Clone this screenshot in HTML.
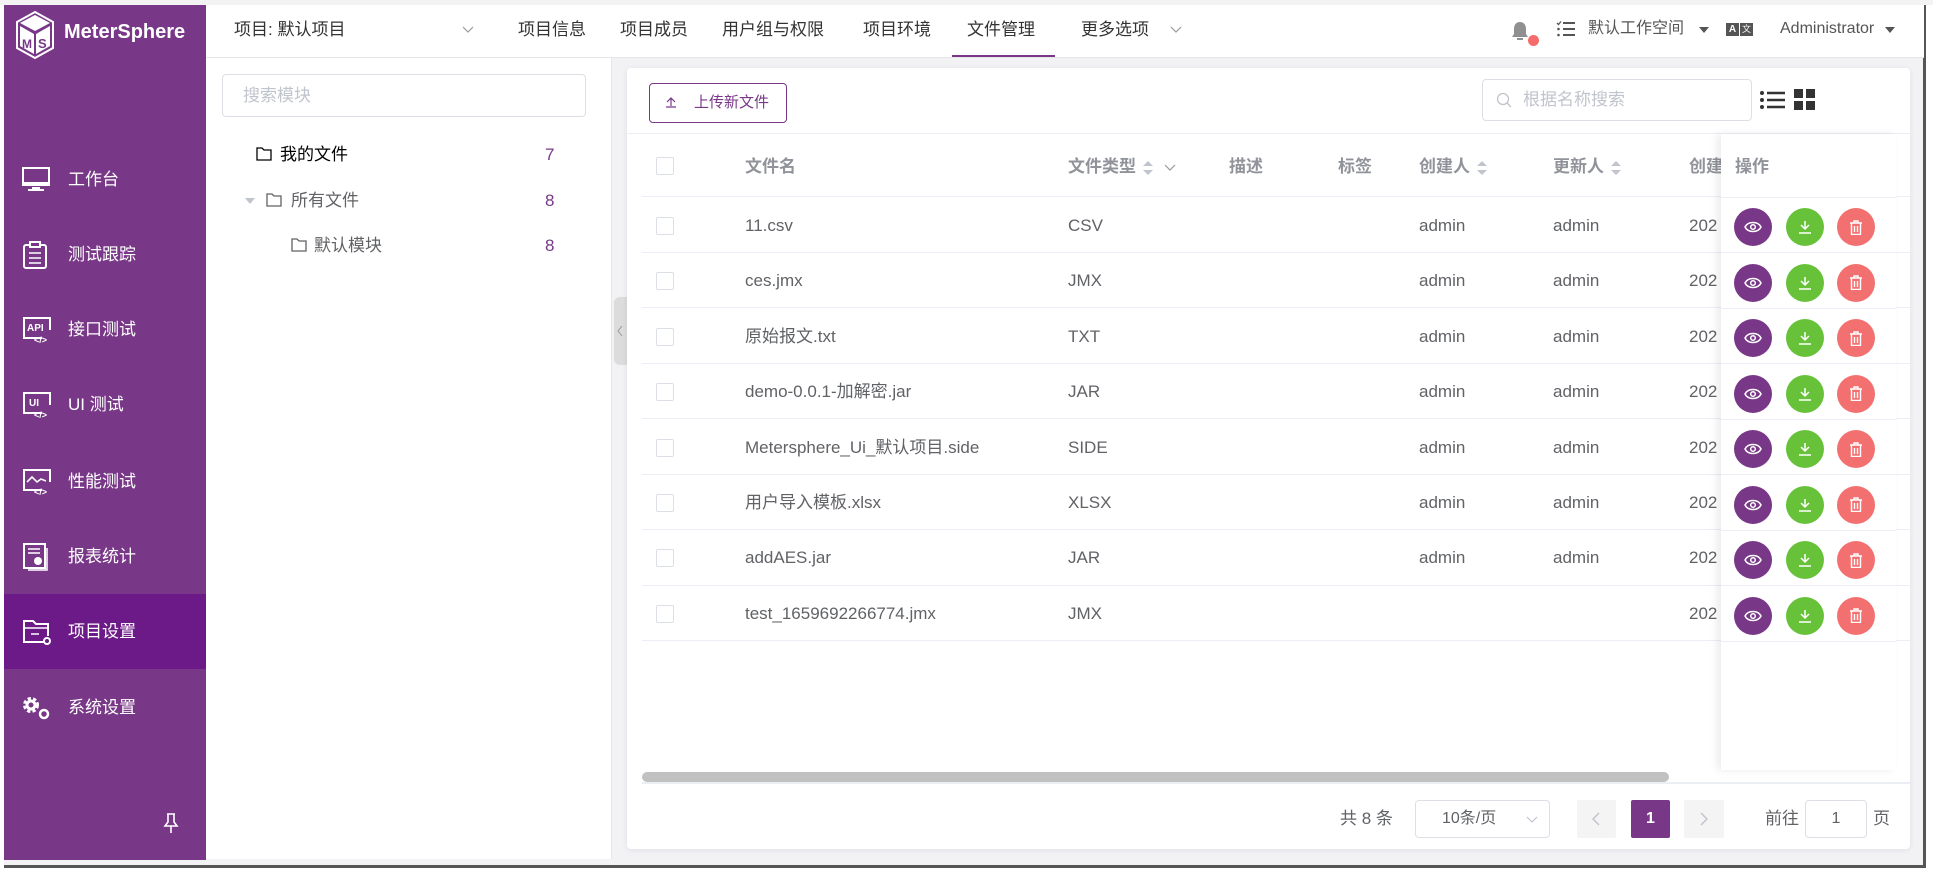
<!DOCTYPE html>
<html><head><meta charset="utf-8">
<style>
*{box-sizing:border-box;margin:0;padding:0}
body{width:1933px;height:875px;background:#fff;position:relative;overflow:hidden;font-family:"Liberation Sans","Noto Sans CJK SC",sans-serif;color:#606266;line-height:20px}
.a{position:absolute;white-space:nowrap;line-height:20px}
.win{left:4px;top:5px;width:1922px;height:863px;background:#f2f2f5;border-right:3px solid #555;border-bottom:3px solid #555;overflow:hidden}
.side{left:4px;top:5px;width:202px;height:855px;background:#783887}
.nav{left:4px;width:202px;height:75px;color:#fff;font-size:17px;display:flex;align-items:center}
.nav svg{position:absolute;left:18px}
.nav span{position:absolute;left:64px}
.hdr{left:206px;top:5px;width:1718px;height:53px;background:#fff;border-bottom:1px solid #e6e6e6}
.hn{top:20px;font-size:17px;color:#333}
.lp{left:206px;top:58px;width:406px;height:801px;background:#fff;border-right:1px solid #e6e6e6}
.card{left:627px;top:68px;width:1283px;height:781px;background:#fff;border-radius:4px;box-shadow:0 1px 6px rgba(0,0,0,.08)}
.th{top:155px;font-size:17px;font-weight:bold;color:#909399}
.cb{width:18px;height:18px;border:1px solid #dcdfe6;border-radius:2px;background:#fff}
.row{left:642px;width:1268px;height:55.5px;border-bottom:1px solid #ebeef5}
.td{font-size:17px;color:#606266}
.btn{width:38px;height:38px;border-radius:50%;display:flex;align-items:center;justify-content:center}
.sort{display:inline-block;vertical-align:middle;margin-left:6px}
</style></head><body>
<div class="a" style="left:0;top:0;width:1933px;height:5px;background:#f3f3f3"></div>
<div class="a win"></div>
<div class="a side"></div>
<svg class="a" style="left:14px;top:10px" width="42" height="50" viewBox="0 0 42 50"><path d="M21 2 L39 12 L39 38 L21 48 L3 38 L3 12 Z" fill="none" stroke="#fff" stroke-width="2"/><path d="M21 5 L36 13 L21 21 L6 13Z" fill="#fff"/><path d="M6 16 L20 24 L20 44 L6 36Z" fill="#fff"/><path d="M22 24 L36 16 L36 36 L22 44Z" fill="#fff"/><text x="8" y="38" font-size="12" font-weight="bold" fill="#783887" font-family="Liberation Sans">M</text><text x="24" y="38" font-size="13" font-weight="bold" fill="#783887" font-family="Liberation Sans">S</text></svg>
<div class="a" style="left:64px;top:20px;color:#fff;font-size:20px;font-weight:bold;line-height:24px">MeterSphere</div>
<div class="a nav" style="top:142px"><svg width="28" height="26" viewBox="0 0 28 26"><rect x="1" y="1" width="26" height="17" fill="none" stroke="#fff" stroke-width="2"/><rect x="1" y="15" width="26" height="3" fill="#fff"/><rect x="10" y="20" width="8" height="2" fill="#fff"/><rect x="6" y="22" width="16" height="2" fill="#fff"/></svg><span>工作台</span></div>
<div class="a nav" style="top:217px"><svg width="26" height="28" viewBox="0 0 26 28"><rect x="2" y="4" width="22" height="23" rx="2" fill="none" stroke="#fff" stroke-width="2"/><rect x="8" y="1" width="10" height="5" fill="#783887" stroke="#fff" stroke-width="2"/><path d="M7 12h12M7 17h12M7 22h12" stroke="#fff" stroke-width="1.6"/></svg><span>测试跟踪</span></div>
<div class="a nav" style="top:292px"><svg width="30" height="28" viewBox="0 0 30 28"><path d="M20 22H2V2h26v12" fill="none" stroke="#fff" stroke-width="2"/><text x="5" y="15" font-size="10" font-weight="bold" fill="#fff" font-family="Liberation Sans">API</text><text x="12" y="27" font-size="9" font-weight="bold" fill="#fff" font-family="Liberation Sans">&lt;/&gt;</text></svg><span>接口测试</span></div>
<div class="a nav" style="top:367px"><svg width="30" height="28" viewBox="0 0 30 28"><path d="M20 22H2V2h26v12" fill="none" stroke="#fff" stroke-width="2"/><text x="7" y="15" font-size="10" font-weight="bold" fill="#fff" font-family="Liberation Sans">UI</text><text x="12" y="27" font-size="9" font-weight="bold" fill="#fff" font-family="Liberation Sans">&lt;/&gt;</text></svg><span>UI 测试</span></div>
<div class="a nav" style="top:444px"><svg width="30" height="28" viewBox="0 0 30 28"><path d="M20 22H2V2h26v12" fill="none" stroke="#fff" stroke-width="2"/><path d="M5 14l5-5 5 5 4-3 5 2" fill="none" stroke="#fff" stroke-width="1.6"/><text x="12" y="27" font-size="9" font-weight="bold" fill="#fff" font-family="Liberation Sans">&lt;/&gt;</text></svg><span>性能测试</span></div>
<div class="a nav" style="top:519px"><svg width="28" height="30" viewBox="0 0 28 30"><rect x="2" y="2" width="21" height="24" fill="none" stroke="#fff" stroke-width="2"/><path d="M25 6v22H6" fill="none" stroke="#fff" stroke-width="1.5"/><path d="M6 7h12M6 11h12" stroke="#fff" stroke-width="1.5"/><circle cx="16" cy="19" r="4" fill="#fff"/></svg><span>报表统计</span></div>
<div class="a nav" style="top:594px;background:#6c1a87"><svg width="30" height="28" viewBox="0 0 30 28"><path d="M23 24H2V3h9l3 3h12v12" fill="none" stroke="#fff" stroke-width="2"/><path d="M2 10h24M9 16h8" stroke="#fff" stroke-width="1.6"/><circle cx="25" cy="23" r="3" fill="none" stroke="#fff" stroke-width="2"/></svg><span>项目设置</span></div>
<div class="a nav" style="top:670px"><svg width="30" height="28" viewBox="0 0 30 28"><circle cx="9" cy="11" r="6" fill="none" stroke="#fff" stroke-width="4" stroke-dasharray="3 2"/><circle cx="9" cy="11" r="4" fill="none" stroke="#fff" stroke-width="3"/><circle cx="22" cy="20" r="4" fill="none" stroke="#fff" stroke-width="2.5"/></svg><span>系统设置</span></div>
<svg class="a" style="left:163px;top:812px" width="16" height="22" viewBox="0 0 16 22"><path d="M4 2h8M5 2v8l-3 4h12l-3-4V2M8 14v7" fill="none" stroke="#fff" stroke-width="1.6"/></svg>
<div class="a hdr"></div>
<div class="a hn" style="left:234px">项目: 默认项目</div>
<svg class="a" style="left:462px;top:26px" width="12" height="8"><path d="M1 1l5 5 5-5" fill="none" stroke="#999" stroke-width="1.2"/></svg>
<div class="a hn" style="left:518px">项目信息</div>
<div class="a hn" style="left:620px">项目成员</div>
<div class="a hn" style="left:722px">用户组与权限</div>
<div class="a hn" style="left:863px">项目环境</div>
<div class="a hn" style="left:967px">文件管理</div>
<div class="a" style="left:952px;top:55px;width:103px;height:2px;background:#783887"></div>
<div class="a hn" style="left:1081px">更多选项</div>
<svg class="a" style="left:1170px;top:26px" width="12" height="8"><path d="M1 1l5 5 5-5" fill="none" stroke="#999" stroke-width="1.2"/></svg>
<svg class="a" style="left:1510px;top:20px" width="20" height="22" viewBox="0 0 20 22"><path d="M10 2c-4 0-6 3-6 7v5l-2 3h16l-2-3V9c0-4-2-7-6-7z" fill="#909090"/><rect x="7" y="18" width="6" height="2" fill="#909090"/></svg>
<div class="a" style="left:1528px;top:35px;width:11px;height:11px;border-radius:50%;background:#f56c6c"></div>
<svg class="a" style="left:1556px;top:21px" width="20" height="16" viewBox="0 0 20 16"><path d="M7 2h12M7 8h12M7 14h12" stroke="#555" stroke-width="2"/><path d="M1 2l1.5 1.5L5 0.5" stroke="#555" fill="none" stroke-width="1.3"/><circle cx="2.5" cy="8" r="1.3" fill="#555"/><circle cx="2.5" cy="14" r="1.3" fill="#555"/></svg>
<div class="a hn" style="left:1588px;top:19px;font-size:16px;color:#555">默认工作空间</div>
<svg class="a" style="left:1699px;top:27px" width="10" height="6"><path d="M0 0h10L5 6z" fill="#555"/></svg>
<div class="a" style="left:1726px;top:23px;width:13px;height:13px;background:#555;color:#fff;font-size:10px;font-weight:bold;text-align:center;line-height:13px">A</div>
<div class="a" style="left:1740px;top:23px;width:13px;height:13px;background:#555;color:#fff;font-size:9px;text-align:center;line-height:13px">文</div>
<div class="a hn" style="left:1780px;top:19px;font-size:16px;color:#555">Administrator</div>
<svg class="a" style="left:1885px;top:27px" width="10" height="6"><path d="M0 0h10L5 6z" fill="#555"/></svg>
<div class="a lp"></div>
<div class="a" style="left:222px;top:74px;width:364px;height:43px;border:1px solid #dcdfe6;border-radius:4px;font-size:17px;color:#c0c4cc;padding:11px 20px">搜索模块</div>
<svg class="a" style="left:256px;top:147px" width="16" height="14"><path d="M1 1h5l2 2h7v10H1z" fill="none" stroke="#000" stroke-width="1.3"/></svg>
<div class="a" style="left:280px;top:145px;font-size:17px;color:#000">我的文件</div>
<div class="a" style="left:545px;top:145px;font-size:17px;color:#783887">7</div>
<svg class="a" style="left:245px;top:198px" width="10" height="6"><path d="M0 0h10L5 6z" fill="#c0c4cc"/></svg>
<svg class="a" style="left:266px;top:193px" width="16" height="14"><path d="M1 1h5l2 2h7v10H1z" fill="none" stroke="#606266" stroke-width="1.3"/></svg>
<div class="a" style="left:291px;top:191px;font-size:17px;color:#606266">所有文件</div>
<div class="a" style="left:545px;top:191px;font-size:17px;color:#783887">8</div>
<svg class="a" style="left:291px;top:238px" width="16" height="14"><path d="M1 1h5l2 2h7v10H1z" fill="none" stroke="#606266" stroke-width="1.3"/></svg>
<div class="a" style="left:314px;top:236px;font-size:17px;color:#606266">默认模块</div>
<div class="a" style="left:545px;top:236px;font-size:17px;color:#783887">8</div>
<div class="a" style="left:614px;top:297px;width:13px;height:68px;background:#dcdcdc;border-radius:6px 0 0 6px"></div>
<svg class="a" style="left:616px;top:325px" width="8" height="12"><path d="M6 1L2 6l4 5" fill="none" stroke="#999" stroke-width="1"/></svg>
<div class="a card"></div>
<div class="a" style="left:649px;top:83px;width:138px;height:40px;border:1px solid #783887;border-radius:4px;color:#783887;font-size:15px;padding:9px 0 0 44px">上传新文件</div>
<svg class="a" style="left:665px;top:96px" width="12" height="12"><path d="M6 10V2M2 6l4-4 4 4M1 11h10" fill="none" stroke="#783887" stroke-width="1.2"/></svg>
<div class="a" style="left:1482px;top:79px;width:270px;height:42px;border:1px solid #dcdfe6;border-radius:4px;font-size:17px;color:#c0c4cc;padding:10px 0 0 40px">根据名称搜索</div>
<svg class="a" style="left:1496px;top:92px" width="16" height="16"><circle cx="7" cy="7" r="5.5" fill="none" stroke="#c0c4cc" stroke-width="1.3"/><path d="M11 11l4 4" stroke="#c0c4cc" stroke-width="1.3"/></svg>
<svg class="a" style="left:1760px;top:90px" width="25" height="20"><circle cx="2" cy="3" r="2" fill="#333"/><circle cx="2" cy="10" r="2" fill="#333"/><circle cx="2" cy="17" r="2" fill="#333"/><path d="M7 3h18M7 10h18M7 17h18" stroke="#333" stroke-width="2.5"/></svg>
<svg class="a" style="left:1794px;top:89px" width="21" height="21"><rect x="0" y="0" width="9" height="9" fill="#333"/><rect x="12" y="0" width="9" height="9" fill="#333"/><rect x="0" y="12" width="9" height="9" fill="#333"/><rect x="12" y="12" width="9" height="9" fill="#333"/></svg>
<div class="a" style="left:627px;top:133px;width:1283px;height:1px;background:#ebeef5"></div>
<div class="a" style="left:642px;top:133px;width:1268px;height:64px;border-bottom:1px solid #ebeef5"></div>
<div class="a cb" style="left:656px;top:157px"></div>
<div class="a th" style="left:745px;top:157px">文件名</div>
<div class="a th" style="left:1068px;top:157px">文件类型<svg class="sort" width="12" height="16"><path d="M1 6l5-5 5 5zM1 10l5 5 5-5z" fill="#c0c4cc"/></svg><svg class="sort" width="12" height="8" style="margin-left:10px"><path d="M1 1l5 5 5-5" fill="none" stroke="#999" stroke-width="1.2"/></svg></div>
<div class="a th" style="left:1229px;top:157px">描述</div>
<div class="a th" style="left:1338px;top:157px">标签</div>
<div class="a th" style="left:1419px;top:157px">创建人<svg class="sort" width="12" height="16"><path d="M1 6l5-5 5 5zM1 10l5 5 5-5z" fill="#c0c4cc"/></svg></div>
<div class="a th" style="left:1553px;top:157px">更新人<svg class="sort" width="12" height="16"><path d="M1 6l5-5 5 5zM1 10l5 5 5-5z" fill="#c0c4cc"/></svg></div>
<div class="a th" style="left:1689px;top:157px">创建</div>

<div class="a row" style="top:197px"></div><div class="a row" style="top:252.5px"></div><div class="a row" style="top:308px"></div><div class="a row" style="top:363.5px"></div><div class="a row" style="top:419px"></div><div class="a row" style="top:474.5px"></div><div class="a row" style="top:530px"></div><div class="a row" style="top:585.5px"></div>

<div class="a cb" style="left:656px;top:217px"></div><div class="a td" style="left:745px;top:216px">11.csv</div><div class="a td" style="left:1068px;top:216px">CSV</div><div class="a td" style="left:1419px;top:216px">admin</div><div class="a td" style="left:1553px;top:216px">admin</div><div class="a td" style="left:1689px;top:216px">202</div>
<div class="a cb" style="left:656px;top:272px"></div><div class="a td" style="left:745px;top:271px">ces.jmx</div><div class="a td" style="left:1068px;top:271px">JMX</div><div class="a td" style="left:1419px;top:271px">admin</div><div class="a td" style="left:1553px;top:271px">admin</div><div class="a td" style="left:1689px;top:271px">202</div>
<div class="a cb" style="left:656px;top:328px"></div><div class="a td" style="left:745px;top:327px">原始报文.txt</div><div class="a td" style="left:1068px;top:327px">TXT</div><div class="a td" style="left:1419px;top:327px">admin</div><div class="a td" style="left:1553px;top:327px">admin</div><div class="a td" style="left:1689px;top:327px">202</div>
<div class="a cb" style="left:656px;top:383px"></div><div class="a td" style="left:745px;top:382px">demo-0.0.1-加解密.jar</div><div class="a td" style="left:1068px;top:382px">JAR</div><div class="a td" style="left:1419px;top:382px">admin</div><div class="a td" style="left:1553px;top:382px">admin</div><div class="a td" style="left:1689px;top:382px">202</div>
<div class="a cb" style="left:656px;top:439px"></div><div class="a td" style="left:745px;top:438px">Metersphere_Ui_默认项目.side</div><div class="a td" style="left:1068px;top:438px">SIDE</div><div class="a td" style="left:1419px;top:438px">admin</div><div class="a td" style="left:1553px;top:438px">admin</div><div class="a td" style="left:1689px;top:438px">202</div>
<div class="a cb" style="left:656px;top:494px"></div><div class="a td" style="left:745px;top:493px">用户导入模板.xlsx</div><div class="a td" style="left:1068px;top:493px">XLSX</div><div class="a td" style="left:1419px;top:493px">admin</div><div class="a td" style="left:1553px;top:493px">admin</div><div class="a td" style="left:1689px;top:493px">202</div>
<div class="a cb" style="left:656px;top:549px"></div><div class="a td" style="left:745px;top:548px">addAES.jar</div><div class="a td" style="left:1068px;top:548px">JAR</div><div class="a td" style="left:1419px;top:548px">admin</div><div class="a td" style="left:1553px;top:548px">admin</div><div class="a td" style="left:1689px;top:548px">202</div>
<div class="a cb" style="left:656px;top:605px"></div><div class="a td" style="left:745px;top:604px">test_1659692266774.jmx</div><div class="a td" style="left:1068px;top:604px">JMX</div><div class="a td" style="left:1689px;top:604px">202</div>

<div class="a" style="left:1721px;top:134px;width:175px;height:636px;background:#fff;box-shadow:-4px 0 8px rgba(0,0,0,.08)"></div>
<div class="a th" style="left:1735px;top:157px">操作</div>
<div class="a" style="left:1721px;top:197px;width:175px;height:1px;background:#ebeef5"></div>
<div class="a" style="left:642px;top:782px;width:1268px;height:2px;background:#ebeef5"></div>
<div class="a" style="left:642px;top:772px;width:1027px;height:10px;background:#c1c1c1;border-radius:5px"></div>
<div class="a" style="left:1340px;top:809px;font-size:17px;color:#606266">共 8 条</div>
<div class="a" style="left:1415px;top:800px;width:135px;height:38px;border:1px solid #dcdfe6;border-radius:4px;font-size:16px;color:#606266;padding:8px 0 0 26px">10条/页</div>
<svg class="a" style="left:1526px;top:816px" width="12" height="8"><path d="M1 1l5 5 5-5" fill="none" stroke="#c0c4cc" stroke-width="1.2"/></svg>
<div class="a" style="left:1577px;top:800px;width:39px;height:38px;background:#f4f4f5;border-radius:2px"></div>
<svg class="a" style="left:1592px;top:812px" width="8" height="14"><path d="M7 1L1 7l6 6" fill="none" stroke="#c0c4cc" stroke-width="1.5"/></svg>
<div class="a" style="left:1631px;top:800px;width:39px;height:38px;background:#783887;border-radius:2px;color:#fff;font-weight:bold;font-size:16px;text-align:center;line-height:38px">1</div>
<div class="a" style="left:1684px;top:800px;width:40px;height:38px;background:#f4f4f5;border-radius:2px"></div>
<svg class="a" style="left:1700px;top:812px" width="8" height="14"><path d="M1 1l6 6-6 6" fill="none" stroke="#c0c4cc" stroke-width="1.5"/></svg>
<div class="a" style="left:1765px;top:809px;font-size:17px;color:#606266">前往</div>
<div class="a" style="left:1805px;top:800px;width:62px;height:38px;border:1px solid #dcdfe6;border-radius:4px;font-size:16px;text-align:center;line-height:36px">1</div>
<div class="a" style="left:1873px;top:809px;font-size:17px;color:#606266">页</div>

<div class="a btn" style="left:1734px;top:208px;background:#783887"><svg width="18" height="12"><path d="M1 6c3-6 13-6 16 0c-3 6-13 6-16 0z" fill="none" stroke="#fff" stroke-width="1.5"/><circle cx="9" cy="6" r="2.3" fill="none" stroke="#fff" stroke-width="1.5"/></svg></div><div class="a btn" style="left:1786px;top:208px;background:#67c23a"><svg width="14" height="14"><path d="M7 1v8M3 5l4 4 4-4M1 13h12" fill="none" stroke="#fff" stroke-width="1.5"/></svg></div><div class="a btn" style="left:1837px;top:208px;background:#f37070"><svg width="14" height="15"><path d="M1 3h12M5 3V1h4v2M2.5 3.5v11h9v-11M5.5 6v6M8.5 6v6" fill="none" stroke="#fff" stroke-width="1.4"/></svg></div>
<div class="a btn" style="left:1734px;top:263.5px;background:#783887"><svg width="18" height="12"><path d="M1 6c3-6 13-6 16 0c-3 6-13 6-16 0z" fill="none" stroke="#fff" stroke-width="1.5"/><circle cx="9" cy="6" r="2.3" fill="none" stroke="#fff" stroke-width="1.5"/></svg></div><div class="a btn" style="left:1786px;top:263.5px;background:#67c23a"><svg width="14" height="14"><path d="M7 1v8M3 5l4 4 4-4M1 13h12" fill="none" stroke="#fff" stroke-width="1.5"/></svg></div><div class="a btn" style="left:1837px;top:263.5px;background:#f37070"><svg width="14" height="15"><path d="M1 3h12M5 3V1h4v2M2.5 3.5v11h9v-11M5.5 6v6M8.5 6v6" fill="none" stroke="#fff" stroke-width="1.4"/></svg></div>
<div class="a btn" style="left:1734px;top:319px;background:#783887"><svg width="18" height="12"><path d="M1 6c3-6 13-6 16 0c-3 6-13 6-16 0z" fill="none" stroke="#fff" stroke-width="1.5"/><circle cx="9" cy="6" r="2.3" fill="none" stroke="#fff" stroke-width="1.5"/></svg></div><div class="a btn" style="left:1786px;top:319px;background:#67c23a"><svg width="14" height="14"><path d="M7 1v8M3 5l4 4 4-4M1 13h12" fill="none" stroke="#fff" stroke-width="1.5"/></svg></div><div class="a btn" style="left:1837px;top:319px;background:#f37070"><svg width="14" height="15"><path d="M1 3h12M5 3V1h4v2M2.5 3.5v11h9v-11M5.5 6v6M8.5 6v6" fill="none" stroke="#fff" stroke-width="1.4"/></svg></div>
<div class="a btn" style="left:1734px;top:374.5px;background:#783887"><svg width="18" height="12"><path d="M1 6c3-6 13-6 16 0c-3 6-13 6-16 0z" fill="none" stroke="#fff" stroke-width="1.5"/><circle cx="9" cy="6" r="2.3" fill="none" stroke="#fff" stroke-width="1.5"/></svg></div><div class="a btn" style="left:1786px;top:374.5px;background:#67c23a"><svg width="14" height="14"><path d="M7 1v8M3 5l4 4 4-4M1 13h12" fill="none" stroke="#fff" stroke-width="1.5"/></svg></div><div class="a btn" style="left:1837px;top:374.5px;background:#f37070"><svg width="14" height="15"><path d="M1 3h12M5 3V1h4v2M2.5 3.5v11h9v-11M5.5 6v6M8.5 6v6" fill="none" stroke="#fff" stroke-width="1.4"/></svg></div>
<div class="a btn" style="left:1734px;top:430px;background:#783887"><svg width="18" height="12"><path d="M1 6c3-6 13-6 16 0c-3 6-13 6-16 0z" fill="none" stroke="#fff" stroke-width="1.5"/><circle cx="9" cy="6" r="2.3" fill="none" stroke="#fff" stroke-width="1.5"/></svg></div><div class="a btn" style="left:1786px;top:430px;background:#67c23a"><svg width="14" height="14"><path d="M7 1v8M3 5l4 4 4-4M1 13h12" fill="none" stroke="#fff" stroke-width="1.5"/></svg></div><div class="a btn" style="left:1837px;top:430px;background:#f37070"><svg width="14" height="15"><path d="M1 3h12M5 3V1h4v2M2.5 3.5v11h9v-11M5.5 6v6M8.5 6v6" fill="none" stroke="#fff" stroke-width="1.4"/></svg></div>
<div class="a btn" style="left:1734px;top:485.5px;background:#783887"><svg width="18" height="12"><path d="M1 6c3-6 13-6 16 0c-3 6-13 6-16 0z" fill="none" stroke="#fff" stroke-width="1.5"/><circle cx="9" cy="6" r="2.3" fill="none" stroke="#fff" stroke-width="1.5"/></svg></div><div class="a btn" style="left:1786px;top:485.5px;background:#67c23a"><svg width="14" height="14"><path d="M7 1v8M3 5l4 4 4-4M1 13h12" fill="none" stroke="#fff" stroke-width="1.5"/></svg></div><div class="a btn" style="left:1837px;top:485.5px;background:#f37070"><svg width="14" height="15"><path d="M1 3h12M5 3V1h4v2M2.5 3.5v11h9v-11M5.5 6v6M8.5 6v6" fill="none" stroke="#fff" stroke-width="1.4"/></svg></div>
<div class="a btn" style="left:1734px;top:541px;background:#783887"><svg width="18" height="12"><path d="M1 6c3-6 13-6 16 0c-3 6-13 6-16 0z" fill="none" stroke="#fff" stroke-width="1.5"/><circle cx="9" cy="6" r="2.3" fill="none" stroke="#fff" stroke-width="1.5"/></svg></div><div class="a btn" style="left:1786px;top:541px;background:#67c23a"><svg width="14" height="14"><path d="M7 1v8M3 5l4 4 4-4M1 13h12" fill="none" stroke="#fff" stroke-width="1.5"/></svg></div><div class="a btn" style="left:1837px;top:541px;background:#f37070"><svg width="14" height="15"><path d="M1 3h12M5 3V1h4v2M2.5 3.5v11h9v-11M5.5 6v6M8.5 6v6" fill="none" stroke="#fff" stroke-width="1.4"/></svg></div>
<div class="a btn" style="left:1734px;top:596.5px;background:#783887"><svg width="18" height="12"><path d="M1 6c3-6 13-6 16 0c-3 6-13 6-16 0z" fill="none" stroke="#fff" stroke-width="1.5"/><circle cx="9" cy="6" r="2.3" fill="none" stroke="#fff" stroke-width="1.5"/></svg></div><div class="a btn" style="left:1786px;top:596.5px;background:#67c23a"><svg width="14" height="14"><path d="M7 1v8M3 5l4 4 4-4M1 13h12" fill="none" stroke="#fff" stroke-width="1.5"/></svg></div><div class="a btn" style="left:1837px;top:596.5px;background:#f37070"><svg width="14" height="15"><path d="M1 3h12M5 3V1h4v2M2.5 3.5v11h9v-11M5.5 6v6M8.5 6v6" fill="none" stroke="#fff" stroke-width="1.4"/></svg></div>

<div class="a" style="left:1721px;top:252px;width:175px;height:1px;background:#ebeef5"></div>
<div class="a" style="left:1721px;top:308px;width:175px;height:1px;background:#ebeef5"></div>
<div class="a" style="left:1721px;top:363px;width:175px;height:1px;background:#ebeef5"></div>
<div class="a" style="left:1721px;top:419px;width:175px;height:1px;background:#ebeef5"></div>
<div class="a" style="left:1721px;top:474px;width:175px;height:1px;background:#ebeef5"></div>
<div class="a" style="left:1721px;top:530px;width:175px;height:1px;background:#ebeef5"></div>
<div class="a" style="left:1721px;top:585px;width:175px;height:1px;background:#ebeef5"></div>
<div class="a" style="left:1721px;top:641px;width:175px;height:1px;background:#ebeef5"></div>
</body></html>
